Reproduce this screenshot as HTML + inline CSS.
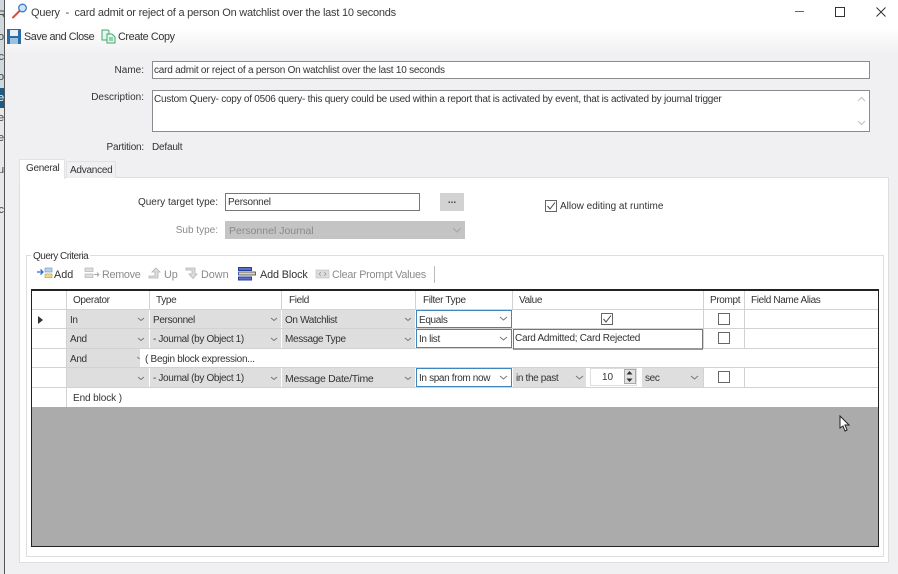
<!DOCTYPE html>
<html><head><meta charset="utf-8"><style>
html,body{margin:0;padding:0;width:898px;height:574px;overflow:hidden;background:#f0eff1}
body{position:relative;font-family:"Liberation Sans",sans-serif;font-size:10px;color:#333}
#w{position:absolute;left:0;top:0;width:898px;height:574px;overflow:hidden;filter:blur(.3px)}
.a{position:absolute;white-space:pre;box-sizing:border-box}
.t{position:absolute;white-space:pre;line-height:14px;height:14px}
.s{letter-spacing:-.35px}
.r{text-align:right}
.g{color:#8a8a8a}
.in{position:absolute;box-sizing:border-box;background:#fff;border:1px solid #8b8b8b}
.c{position:absolute;box-sizing:border-box;background:#dedede;line-height:22px;padding-left:3px;white-space:pre;color:#333;letter-spacing:-.35px}
.d{line-height:22px}
.f{position:absolute;box-sizing:border-box;background:#fff;border:1px solid #3d86c0;line-height:19px;padding-left:2px;white-space:pre;color:#333;letter-spacing:-.35px}
.cb{position:absolute;width:12px;height:12px;box-sizing:border-box;border:1px solid #666;background:#fff}
.h{position:absolute;left:0;height:1px;background:#d2d2d2}
.v{position:absolute;width:1px;background:#d2d2d2}
.l{position:absolute;left:-2px;width:6px;overflow:hidden;line-height:12px;height:12px;font-size:11px;color:#444;text-align:right;white-space:pre}
svg{position:absolute;overflow:visible}
</style></head><body><div id="w">
<div class="a" style="left:0;top:0;width:898px;height:55px;background:linear-gradient(#fff 0,#fff 28px,#f0eff1 55px)"></div>
<div class="a" style="left:0;top:0;width:4px;height:574px;background:#e6e8e8"></div>
<div class="a" style="left:0;top:0;width:4px;height:88px;background:#cfd8dc"></div>
<div class="a" style="left:0;top:88px;width:4px;height:20px;background:#1d5a85"></div>
<div class="l" style="top:9px">R</div><div class="l" style="top:31px">o</div><div class="l" style="top:51px">c</div><div class="l" style="top:71px">o</div>
<div class="l" style="top:92px;color:#fff">e</div><div class="l" style="top:112px">e</div><div class="l" style="top:132px">e</div><div class="l" style="top:164px">u</div><div class="l" style="top:204px">c</div>
<div class="a" style="left:4px;top:0;width:1px;height:574px;background:#555"></div>

<svg style="left:12px;top:3px" width="16" height="16" viewBox="0 0 16 16"><path d="M1 14.5 L7.5 8" stroke="#d8503a" stroke-width="2" fill="none" stroke-linecap="round"/><circle cx="10.5" cy="5" r="3.8" fill="#cfe3f8" stroke="#3f78c8" stroke-width="1.3"/></svg>
<div class="t" style="left:31px;top:6px;font-size:11px;letter-spacing:-.23px;color:#3a3a3a">Query  -  card admit or reject of a person On watchlist over the last 10 seconds</div>
<div class="a" style="left:795px;top:11px;width:9px;height:1px;background:#666"></div>
<div class="a" style="left:835px;top:7px;width:10px;height:10px;border:1px solid #333"></div>
<svg style="left:876px;top:7px" width="10" height="10" viewBox="0 0 10 10"><path d="M0.5 .5 L9.5 9.5 M9.5 .5 L.5 9.5" stroke="#333" stroke-width="1" fill="none"/></svg>

<svg style="left:7px;top:29px" width="14" height="15" viewBox="0 0 14 15"><rect width="14" height="15" fill="#2a6ca8"/><rect x="3" y="1" width="8" height="6" fill="#e8eef4"/><rect x="3" y="9" width="8" height="6" fill="#9fc0dc"/></svg>
<div class="t" style="left:24px;top:30px;font-size:10.8px;letter-spacing:-.43px">Save and Close</div>
<svg style="left:101px;top:29px" width="15" height="15" viewBox="0 0 15 15"><path d="M1 1H7L8 2V11H1Z" fill="#e4f6ec" stroke="#3fa872"/><path d="M6 5H11L14 8V14H6Z" fill="#e4f6ec" stroke="#3fa872"/><path d="M8 9H12M8 11H12" stroke="#3fa872"/></svg>
<div class="t" style="left:118px;top:30px;font-size:10.8px;letter-spacing:-.36px">Create Copy</div>

<div class="t r" style="left:60px;width:84px;top:64px">Name:</div>
<div class="in" style="left:152px;top:61px;width:718px;height:18px"></div>
<div class="t" style="left:154px;top:64px;letter-spacing:-.23px">card admit or reject of a person On watchlist over the last 10 seconds</div>
<div class="t r" style="left:60px;width:84px;top:91px">Description:</div>
<div class="in" style="left:152px;top:90px;width:718px;height:42px"></div>
<div class="t" style="left:154px;top:93px;letter-spacing:-.24px">Custom Query- copy of 0506 query- this query could be used within a report that is activated by event, that is activated by journal trigger</div>
<svg style="left:857px;top:96px" width="9" height="30" viewBox="0 0 9 30"><path d="M1 5 L4.500 1.500 L8 5 M1 25 L4.500 28.500 L8 25" stroke="#c4c4c4" fill="none" stroke-width="1.200"/></svg>
<div class="t r" style="left:60px;width:84px;top:141px;letter-spacing:-.2px">Partition:</div>
<div class="t" style="left:152px;top:141px;letter-spacing:-.2px">Default</div>

<div class="a" style="left:19px;top:177px;width:870px;height:386px;background:#fff;border:1px solid #dedede"></div>
<div class="a" style="left:19px;top:159px;width:46px;height:20px;background:#fff;border:1px solid #e2e2e2;border-bottom:none"></div>
<div class="a" style="left:66px;top:161px;width:50px;height:17px;background:#f0eff1;border:1px solid #e2e2e2;border-bottom:none"></div>
<div class="t" style="left:26px;top:162px;letter-spacing:-.3px">General</div>
<div class="t" style="left:70px;top:164px;letter-spacing:-.25px">Advanced</div>

<div class="t r" style="left:100px;width:118px;top:196px">Query target type:</div>
<div class="in" style="left:225px;top:193px;width:195px;height:18px;border-color:#777"></div>
<div class="t" style="left:228px;top:196px;letter-spacing:-.25px">Personnel</div>
<div class="a" style="left:440px;top:193px;width:24px;height:18px;background:#d2d2d2;text-align:center;line-height:16px;color:#444;font-weight:bold">...</div>
<div class="t r g" style="left:100px;width:118px;top:224px">Sub type:</div>
<div class="a" style="left:225px;top:221px;width:240px;height:18px;background:#c4c4c4"></div>
<div class="t g" style="left:229px;top:224px;font-size:10.5px">Personnel Journal</div>
<svg style="left:452px;top:227px" width="10" height="6" viewBox="0 0 10 6"><path d="M1 1 L5 5 L9 1" stroke="#a4a4a4" fill="none"/></svg>
<div class="cb" style="left:545px;top:200px"></div>
<svg style="left:545px;top:200px" width="12" height="12" viewBox="0 0 12 12"><path d="M2.500 6 L5 9 L10 2.500" stroke="#444" fill="none"/></svg>
<div class="t" style="left:560px;top:200px">Allow editing at runtime</div>

<div class="a" style="left:26px;top:255px;width:858px;height:302px;border:1px solid #dedede"></div>
<div class="t" style="left:31px;top:250px;background:#fff;padding:0 2px;letter-spacing:-.5px">Query Criteria</div>

<svg style="left:37px;top:267px" width="16" height="13" viewBox="0 0 16 13"><path d="M0 5H6M3.500 2.500 L6 5 L3.500 7.500" stroke="#2a6fd0" fill="none" stroke-width="1.300"/><rect x="8" y="1" width="7" height="4" fill="#b9d2ee" stroke="#6a90c0" stroke-width=".6"/><rect x="8" y="7" width="7" height="3.500" fill="#f0d890" stroke="#b09a50" stroke-width=".6"/></svg>
<div class="t" style="left:54px;top:268px;font-size:10.8px">Add</div>
<svg style="left:85px;top:267px" width="15" height="13" viewBox="0 0 15 13"><rect x="0" y="1" width="8" height="3.500" fill="#ddd" stroke="#aaa" stroke-width=".6"/><rect x="0" y="7" width="8" height="3.500" fill="#ddd" stroke="#aaa" stroke-width=".6"/><path d="M9 7.500H14M12 5.500 L14 7.500 L12 9.500" stroke="#aaa" fill="none"/></svg>
<div class="t g" style="left:102px;top:268px;font-size:10.8px;letter-spacing:-.3px">Remove</div>
<svg style="left:148px;top:267px" width="14" height="13" viewBox="0 0 14 13"><path d="M8 1 L12 5H10V11H1V9H7V5H4Z" fill="#ddd" stroke="#b5b5b5" stroke-width=".8"/></svg>
<div class="t g" style="left:164px;top:268px;font-size:10.8px">Up</div>
<svg style="left:185px;top:267px" width="14" height="13" viewBox="0 0 14 13"><path d="M1 1H10V7H12L8 11.500 L4 7H7V3H1Z" fill="#ddd" stroke="#b5b5b5" stroke-width=".8"/></svg>
<div class="t g" style="left:201px;top:268px;font-size:10.8px">Down</div>
<svg style="left:238px;top:267px" width="19" height="14" viewBox="0 0 19 14"><rect x=".5" y=".5" width="13" height="3" fill="#5a6fc8" stroke="#2a3f98"/><rect x=".5" y="5" width="17" height="3" fill="#e8d890" stroke="#2a3f98" stroke-width=".8"/><rect x=".5" y="10" width="13" height="3" fill="#5a6fc8" stroke="#2a3f98"/></svg>
<div class="t" style="left:260px;top:268px;font-size:10.8px;letter-spacing:-.1px">Add Block</div>
<svg style="left:316px;top:270px" width="13" height="8" viewBox="0 0 13 8"><rect width="13" height="8" fill="#ddd" stroke="#bbb" stroke-width=".6"/><path d="M5 2 L3 4 L5 6 M8 2 L10 4 L8 6" stroke="#999" fill="none" stroke-width=".8"/></svg>
<div class="t g" style="left:332px;top:268px;font-size:10.8px;letter-spacing:-.26px">Clear Prompt Values</div>
<div class="a" style="left:434px;top:266px;width:1px;height:17px;background:#bbb"></div>

<!-- grid -->
<div class="a" style="left:31px;top:289px;width:848px;height:258px;background:#ababab;border:1px solid #222;border-top-width:2px"></div>
<div class="a" style="left:32px;top:291px;width:846px;height:116px;background:#fff"></div>
<div class="h" style="left:32px;width:846px;top:309px"></div>
<div class="h" style="left:32px;width:846px;top:328px"></div>
<div class="h" style="left:32px;width:846px;top:348px"></div>
<div class="h" style="left:32px;width:846px;top:367px"></div>
<div class="h" style="left:32px;width:846px;top:387px"></div>
<div class="v" style="left:66px;top:291px;height:116px"></div>
<div class="v" style="left:149px;top:291px;height:18px"></div>
<div class="v" style="left:281px;top:291px;height:18px"></div>
<div class="v" style="left:415px;top:291px;height:18px"></div>
<div class="v" style="left:512px;top:291px;height:18px"></div>
<div class="v" style="left:703px;top:291px;height:57px"></div>
<div class="v" style="left:744px;top:291px;height:57px"></div>
<div class="v" style="left:703px;top:368px;height:19px"></div>
<div class="v" style="left:744px;top:368px;height:19px"></div>
<div class="t s" style="left:73px;top:294px">Operator</div>
<div class="t s" style="left:156px;top:294px">Type</div>
<div class="t s" style="left:289px;top:294px">Field</div>
<div class="t s" style="left:423px;top:294px">Filter Type</div>
<div class="t s" style="left:519px;top:294px">Value</div>
<div class="t s" style="left:710px;top:294px">Prompt</div>
<div class="t s" style="left:751px;top:294px">Field Name Alias</div>
<svg style="left:38px;top:316px" width="5" height="8" viewBox="0 0 5 8"><path d="M0 0 L5 4 L0 8Z" fill="#333"/></svg>

<!-- row 1 -->
<div class="c" style="left:67px;top:310px;width:82px;height:18px;overflow:hidden">In</div>
<div class="c" style="left:150px;top:310px;width:131px;height:18px;overflow:hidden">Personnel</div>
<div class="c" style="left:282px;top:310px;width:133px;height:18px;overflow:hidden">On Watchlist</div>
<div class="f" style="left:416px;top:310px;width:96px;height:18px;overflow:hidden">Equals</div>
<!-- row 2 -->
<div class="c d" style="left:67px;top:329px;width:82px;height:19px">And</div>
<div class="c d" style="left:150px;top:329px;width:131px;height:19px">- Journal (by Object 1)</div>
<div class="c d" style="left:282px;top:329px;width:133px;height:19px">Message Type</div>
<div class="f" style="left:416px;top:329px;width:96px;height:19px;line-height:20px">In list</div>
<!-- row 3 -->
<div class="c" style="left:67px;top:349px;width:82px;height:18px;overflow:hidden">And</div>
<div class="a" style="left:140px;top:349px;width:120px;height:18px;background:#fff"></div>
<div class="t" style="left:145px;top:353px;letter-spacing:-.28px">( Begin block expression...</div>
<!-- row 4 -->
<div class="c" style="left:67px;top:368px;width:82px;height:19px"></div>
<div class="c d" style="left:150px;top:368px;width:131px;height:19px">- Journal (by Object 1)</div>
<div class="c d" style="left:282px;top:368px;width:133px;height:19px;font-size:10.5px;letter-spacing:-.3px">Message Date/Time</div>
<div class="f" style="left:416px;top:368px;width:96px;height:19px;line-height:20px">In span from now</div>
<div class="c d" style="left:513px;top:368px;width:73px;height:19px">in the past</div>
<div class="a" style="left:590px;top:368px;width:47px;height:18px;background:#fff;border:1px solid #ddd"></div>
<div class="t" style="left:602px;top:371px">10</div>
<div class="a" style="left:624px;top:369px;width:12px;height:15px;background:#e2e2e2;border:1px solid #aaa"></div>
<svg style="left:626px;top:371px" width="7" height="11" viewBox="0 0 7 11"><path d="M3.500 0 L6.500 3.500H.5Z M3.500 11 L6.500 7.500H.5Z" fill="#333"/></svg>
<div class="c d" style="left:642px;top:368px;width:61px;height:19px">sec</div>
<div class="t" style="left:73px;top:392px;letter-spacing:-.1px">End block )</div>

<!-- arrows -->
<svg style="left:0;top:0" width="898" height="574" viewBox="0 0 898 574"><g stroke="#777" fill="none" stroke-width="1">
<path d="M138 318l3 2.500 3-2.500M271 318l3 2.500 3-2.500M405 318l3 2.500 3-2.500M500 317l3.500 3 3.500-3"/>
<path d="M138 338l3 2.500 3-2.500M271 338l3 2.500 3-2.500M405 338l3 2.500 3-2.500M500 337l3.500 3 3.500-3"/>
<path d="M138 377l3 2.500 3-2.500M271 377l3 2.500 3-2.500M405 377l3 2.500 3-2.500M500 376l3.500 3 3.500-3M576 376l3.500 3 3.500-3M691 376l3.500 3 3.500-3"/>
<path d="M137.500 357l2 2"/>
</g></svg>

<!-- value cells -->
<div class="cb" style="left:601px;top:313px"></div>
<svg style="left:601px;top:313px" width="12" height="12" viewBox="0 0 12 12"><path d="M2.500 6 L5 9 L10 2.500" stroke="#444" fill="none"/></svg>
<div class="a" style="left:513px;top:329px;width:190px;height:21px;background:#fff;border:1px solid #777;border-bottom:2px solid #999;line-height:18px;padding-left:1px;letter-spacing:-.28px">Card Admitted; Card Rejected</div>
<div class="cb" style="left:718px;top:313px"></div>
<div class="cb" style="left:718px;top:332px"></div>
<div class="cb" style="left:718px;top:371px"></div>

<svg style="left:839px;top:415px" width="12" height="18" viewBox="0 0 12 18"><path d="M1 1 L1 13 L4 11 L6 16 L8 15 L6 10 L10 10 Z" fill="#fff" stroke="#222" stroke-width="1"/></svg>
</div></body></html>
